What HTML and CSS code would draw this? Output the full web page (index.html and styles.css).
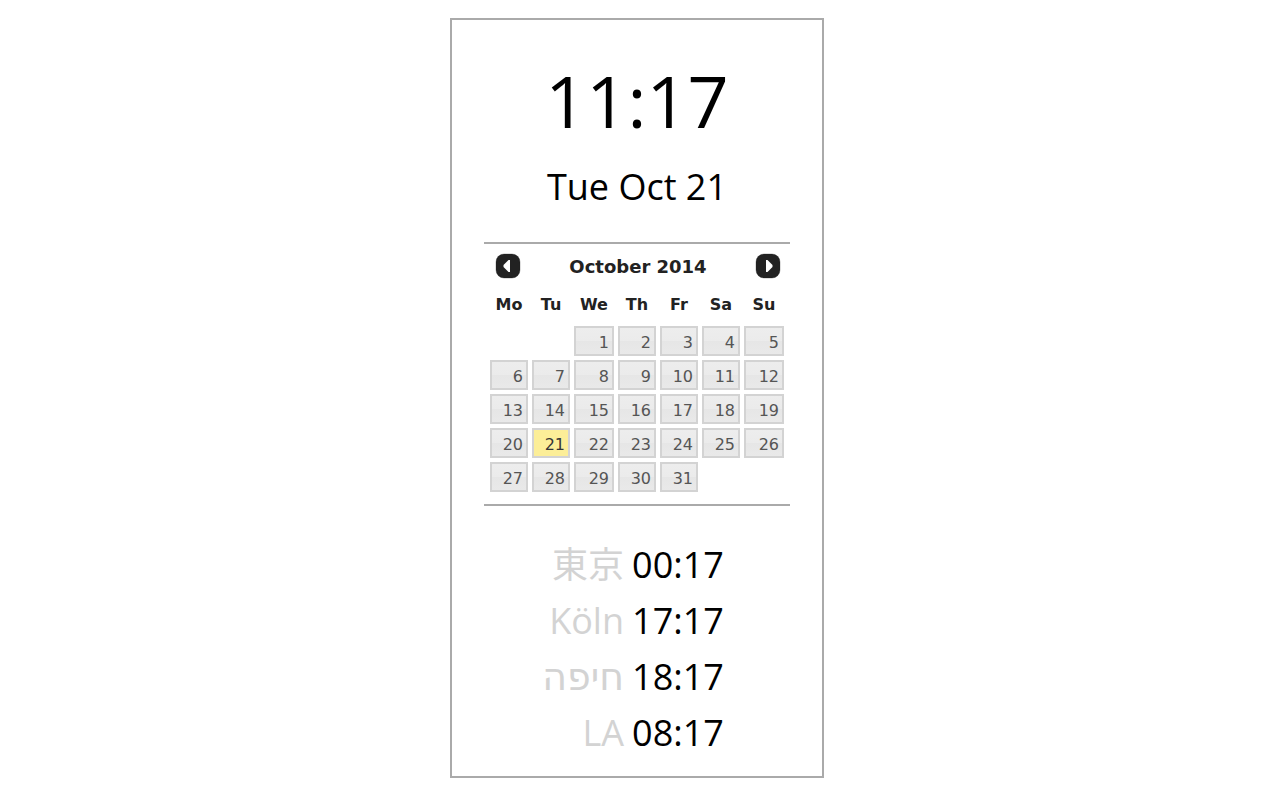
FILE: index.html
```
<!DOCTYPE html>
<html lang="en">
<head>
    <meta charset="UTF-8">
    <meta name="viewport" content="width=device-width, initial-scale=1.0">
    <title>World Clock</title>
    <link rel="stylesheet" href="styles.css">
</head>
<body>
    <main class="clock-card">
        <div class="time">11:17</div>
        <div class="date">Tue Oct 21</div>

        <div class="calendar">
            <div class="calendar-header">
                <button type="button" class="nav-button" aria-label="Previous month">
                    <svg viewBox="0 0 26 26" width="26" height="26">
                        <rect x="1" y="1" width="24" height="24" rx="8" fill="#222" stroke="#222" stroke-opacity="0.3"/>
                        <path d="M15 7v12h-1.500l-5-5v-2l5-5z" fill="#fff"/>
                    </svg>
                </button>
                <div class="calendar-title">October 2014</div>
                <button type="button" class="nav-button" aria-label="Next month">
                    <svg viewBox="0 0 26 26" width="26" height="26">
                        <rect x="1" y="1" width="24" height="24" rx="8" fill="#222" stroke="#222" stroke-opacity="0.3"/>
                        <path d="M11 7v12h1.500l5-5v-2l-5-5z" fill="#fff"/>
                    </svg>
                </button>
            </div>
            <table class="days">
                <colgroup>
                    <col><col><col class="wide"><col><col><col><col class="wide">
                </colgroup>
                <thead>
                    <tr><th>Mo</th><th>Tu</th><th>We</th><th>Th</th><th>Fr</th><th>Sa</th><th>Su</th></tr>
                </thead>
                <tbody>
                    <tr>
                        <td></td>
                        <td></td>
                        <td><a href="#">1</a></td>
                        <td><a href="#">2</a></td>
                        <td><a href="#">3</a></td>
                        <td><a href="#">4</a></td>
                        <td><a href="#">5</a></td>
                    </tr>
                    <tr>
                        <td><a href="#">6</a></td>
                        <td><a href="#">7</a></td>
                        <td><a href="#">8</a></td>
                        <td><a href="#">9</a></td>
                        <td><a href="#">10</a></td>
                        <td><a href="#">11</a></td>
                        <td><a href="#">12</a></td>
                    </tr>
                    <tr>
                        <td><a href="#">13</a></td>
                        <td><a href="#">14</a></td>
                        <td><a href="#">15</a></td>
                        <td><a href="#">16</a></td>
                        <td><a href="#">17</a></td>
                        <td><a href="#">18</a></td>
                        <td><a href="#">19</a></td>
                    </tr>
                    <tr>
                        <td><a href="#">20</a></td>
                        <td><a href="#" class="today">21</a></td>
                        <td><a href="#">22</a></td>
                        <td><a href="#">23</a></td>
                        <td><a href="#">24</a></td>
                        <td><a href="#">25</a></td>
                        <td><a href="#">26</a></td>
                    </tr>
                    <tr>
                        <td><a href="#">27</a></td>
                        <td><a href="#">28</a></td>
                        <td><a href="#">29</a></td>
                        <td><a href="#">30</a></td>
                        <td><a href="#">31</a></td>
                        <td></td>
                        <td></td>
                    </tr>
                </tbody>
            </table>
        </div>

        <table class="cities">
            <tr><th lang="ja" scope="row">東京</th><td>00:17</td></tr>
            <tr><th lang="de" scope="row">Köln</th><td>17:17</td></tr>
            <tr><th lang="he" scope="row">חיפה</th><td>18:17</td></tr>
            <tr><th scope="row">LA</th><td>08:17</td></tr>
        </table>
    </main>
</body>
</html>
```
FILE: styles.css
```
* {
    box-sizing: border-box;
}

body {
    margin: 0;
    padding: 18px 6px 18px 0;
    background-color: #fff;
    color: #000;
    font-family: "Open Sans", "Noto Sans CJK JP", sans-serif;
}

.clock-card {
    width: 100%;
    max-width: 374px;
    margin: 0 auto;
    padding: 32px 32px 15px;
    border: 2px solid #aaa;
}

.time {
    font-size: 72px;
    line-height: 96px;
    text-align: center;
}

.date {
    margin-top: 15px;
    font-size: 36px;
    line-height: 48px;
    text-align: center;
}

/* Calendar */
.calendar {
    margin: 31px 0;
    padding-bottom: 10px;
    border-top: 2px solid #aaa;
    border-bottom: 2px solid #aaa;
    font-family: Verdana, "DejaVu Sans", sans-serif;
    font-size: 16px;
    color: #222;
}

.calendar-header {
    display: flex;
    align-items: center;
    justify-content: space-between;
    height: 44px;
    padding: 0 9px 0 11px;
}

.calendar-title {
    font-size: 18px;
    font-weight: bold;
}

.nav-button {
    width: 26px;
    height: 26px;
    padding: 0;
    border: none;
    background: none;
    cursor: pointer;
}

.nav-button svg {
    display: block;
}

.days {
    width: 298px;
    margin: 0 auto;
    table-layout: fixed;
    border-collapse: collapse;
}

.days col {
    width: 42px;
}

.days .wide {
    width: 44px;
}

.days th {
    padding: 1px 0 3px;
    line-height: 32px;
    text-align: center;
}

.days td {
    padding: 2px;
}

.days a {
    display: block;
    height: 30px;
    padding: 0 3px;
    border: 2px solid #d3d3d3;
    background: linear-gradient(#ededed, #ebebeb 50%, #e6e6e6 50%, #e9e9e9);
    color: #555;
    line-height: 30px;
    text-align: right;
    text-decoration: none;
}

.days .today {
    background: #fcee98;
    color: #363636;
}

/* Other cities */
.cities {
    margin: 0 auto;
    border-collapse: collapse;
    font-size: 36px;
    line-height: 56px;
}

.cities th {
    padding: 0 8px 0 0;
    color: #d3d3d3;
    font-weight: 400;
    text-align: right;
}

.cities th:lang(he) {
    font-family: "DejaVu Sans", sans-serif;
    font-size: 38px;
}

.cities td {
    padding: 0 8px 0 0;
}
```
